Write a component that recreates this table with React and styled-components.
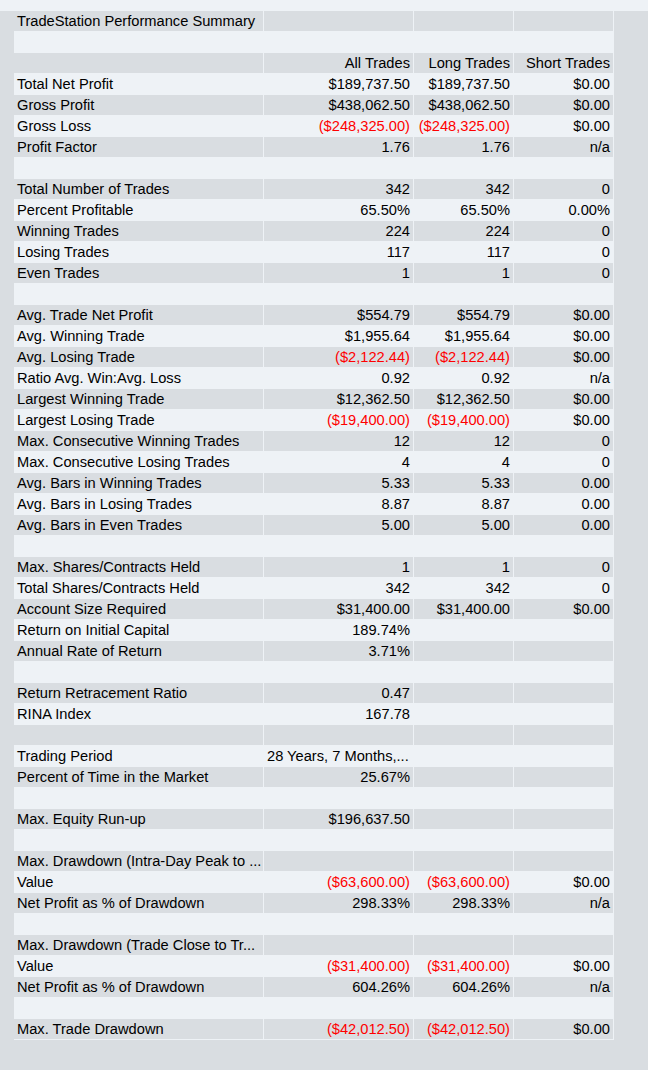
import React from "react";
import styled, { createGlobalStyle } from "styled-components";

const LIGHT = "#eef2f6";
const GREY = "#d9dde1";

const GlobalStyle = createGlobalStyle`
  html, body {
    margin: 0;
    padding: 0;
    background: ${GREY};
  }
  body {
    font-family: "Liberation Sans", Arial, sans-serif;
    color: #000;
  }
`;

const TopBar = styled.div`
  height: 11px;
  background: ${LIGHT};
`;

const Page = styled.main`
  padding-left: 14px;
  padding-bottom: 30px;
`;

const Table = styled.div`
  display: inline-flex;
  flex-direction: column;
  gap: 1px;
  padding: 0 1px 1px 0;
  background: ${LIGHT};
`;

const Row = styled.div`
  display: grid;
  grid-template-columns: 249px 149px 99px 99px;
  column-gap: 1px;
`;

const Cell = styled.div`
  height: 20px;
  line-height: 20px;
  padding: 0 3px;
  font-size: 14.667px;
  background: ${(p) => (p.$shade ? GREY : LIGHT)};
  color: ${(p) => (p.$red ? "#ff0000" : "#000")};
  text-align: ${(p) => p.$align || "right"};
  white-space: nowrap;
  overflow: hidden;
`;

const Label = styled(Cell)`
  text-align: left;
`;

const isRed = (v) => typeof v === "string" && v.startsWith("(");

const rows = [
  ["TradeStation Performance Summary", "", "", ""],
  [],
  ["", "All Trades", "Long Trades", "Short Trades"],
  ["Total Net Profit", "$189,737.50", "$189,737.50", "$0.00"],
  ["Gross Profit", "$438,062.50", "$438,062.50", "$0.00"],
  ["Gross Loss", "($248,325.00)", "($248,325.00)", "$0.00"],
  ["Profit Factor", "1.76", "1.76", "n/a"],
  [],
  ["Total Number of Trades", "342", "342", "0"],
  ["Percent Profitable", "65.50%", "65.50%", "0.00%"],
  ["Winning Trades", "224", "224", "0"],
  ["Losing Trades", "117", "117", "0"],
  ["Even Trades", "1", "1", "0"],
  [],
  ["Avg. Trade Net Profit", "$554.79", "$554.79", "$0.00"],
  ["Avg. Winning Trade", "$1,955.64", "$1,955.64", "$0.00"],
  ["Avg. Losing Trade", "($2,122.44)", "($2,122.44)", "$0.00"],
  ["Ratio Avg. Win:Avg. Loss", "0.92", "0.92", "n/a"],
  ["Largest Winning Trade", "$12,362.50", "$12,362.50", "$0.00"],
  ["Largest Losing Trade", "($19,400.00)", "($19,400.00)", "$0.00"],
  ["Max. Consecutive Winning Trades", "12", "12", "0"],
  ["Max. Consecutive Losing Trades", "4", "4", "0"],
  ["Avg. Bars in Winning Trades", "5.33", "5.33", "0.00"],
  ["Avg. Bars in Losing Trades", "8.87", "8.87", "0.00"],
  ["Avg. Bars in Even Trades", "5.00", "5.00", "0.00"],
  [],
  ["Max. Shares/Contracts Held", "1", "1", "0"],
  ["Total Shares/Contracts Held", "342", "342", "0"],
  ["Account Size Required", "$31,400.00", "$31,400.00", "$0.00"],
  ["Return on Initial Capital", "189.74%", "", ""],
  ["Annual Rate of Return", "3.71%", "", ""],
  [],
  ["Return Retracement Ratio", "0.47", "", ""],
  ["RINA Index", "167.78", "", ""],
  [],
  ["Trading Period", { text: "28 Years, 7 Months,...", align: "left" }, "", ""],
  ["Percent of Time in the Market", "25.67%", "", ""],
  [],
  ["Max. Equity Run-up", "$196,637.50", "", ""],
  [],
  ["Max. Drawdown (Intra-Day Peak to ...", "", "", ""],
  ["Value", "($63,600.00)", "($63,600.00)", "$0.00"],
  ["Net Profit as % of Drawdown", "298.33%", "298.33%", "n/a"],
  [],
  ["Max. Drawdown (Trade Close to Tr...", "", "", ""],
  ["Value", "($31,400.00)", "($31,400.00)", "$0.00"],
  ["Net Profit as % of Drawdown", "604.26%", "604.26%", "n/a"],
  [],
  ["Max. Trade Drawdown", "($42,012.50)", "($42,012.50)", "$0.00"],
];

export default function App() {
  return (
    <>
      <GlobalStyle />
      <TopBar />
      <Page>
        <Table>
          {rows.map((r, i) => {
            const shade = i % 2 === 0;
            const [label = "", ...vals] = r;
            while (vals.length < 3) vals.push("");
            return (
              <Row key={i}>
                <Label $shade={shade}>{label}</Label>
                {vals.map((v, j) => {
                  const text = typeof v === "object" ? v.text : v;
                  const align = typeof v === "object" ? v.align : "right";
                  return (
                    <Cell key={j} $shade={shade} $red={isRed(text)} $align={align}>
                      {text}
                    </Cell>
                  );
                })}
              </Row>
            );
          })}
        </Table>
      </Page>
    </>
  );
}
